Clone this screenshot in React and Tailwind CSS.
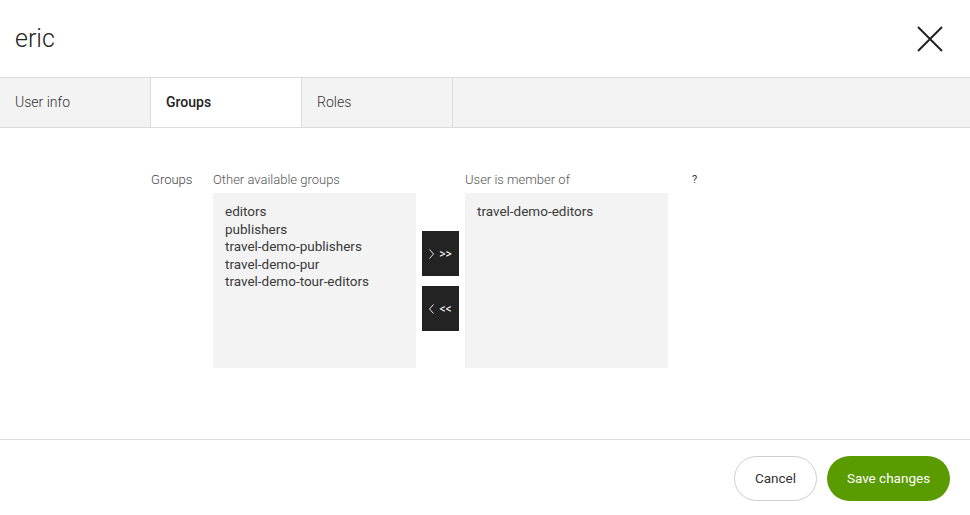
import { useState } from 'react';

const available = ['editors', 'publishers', 'travel-demo-publishers', 'travel-demo-pur', 'travel-demo-tour-editors'];
const member = ['travel-demo-editors'];

const tabs = ['User info', 'Groups', 'Roles'];

const Chevron = ({ left }) => (
    <svg width="5" height="10" viewBox="0 0 5 10" className="text-white">
        <path d={left ? 'M4.5 0.5 L0.5 5 L4.5 9.5' : 'M0.5 0.5 L4.5 5 L0.5 9.5'} stroke="currentColor" strokeWidth="0.9" fill="none" />
    </svg>
);

const App = () => {
    const [active, setActive] = useState('Groups');

    return (
        <div className="w-[970px] h-[515px] bg-white flex flex-col text-[#333]" style={{ fontFamily: 'Roboto, sans-serif' }}>
            {/* Header */}
            <div className="h-[77px] flex items-center justify-between pl-[15px] pr-[27px]">
                <span className="text-[25px] font-light text-[#222] leading-none -mt-[1px]">eric</span>
                <svg width="26" height="26" viewBox="0 0 26 26" className="text-[#222]">
                    <path d="M1 1 L25 25 M25 1 L1 25" stroke="currentColor" strokeWidth="2" fill="none" />
                </svg>
            </div>

            {/* Tabs */}
            <div className="h-[51px] flex border-t border-b border-[#dcdcdc] bg-[#f3f3f3]">
                {tabs.map(t => (
                    <button
                        key={t}
                        onClick={() => setActive(t)}
                        className={
                            'w-[151px] h-full text-left pl-[15px] text-[14px] border-r border-[#dcdcdc] ' +
                            (active === t ? 'bg-white font-medium text-[#222] -mb-[1px] h-[50px]' : 'font-light text-[#333]')
                        }
                    >
                        {t}
                    </button>
                ))}
                <div className="flex-1" />
            </div>

            {/* Content */}
            <div className="flex-1 flex pt-[41px] pl-[151px]">
                <div className="text-[13px] font-light text-[#444] w-[62px] pt-[1px]">Groups</div>
                <div className="flex flex-col">
                    <div className="text-[13px] font-light text-[#555] h-[24px] pt-[1px]">Other available groups</div>
                    <div className="w-[203px] h-[175px] bg-[#f3f3f3] pt-[10px] pl-[12px] text-[13.5px] leading-[17.5px] text-[#3a3a3a]">
                        {available.map(g => (
                            <div key={g}>{g}</div>
                        ))}
                    </div>
                </div>
                <div className="flex flex-col pt-[62px] px-[6px] gap-[10px]">
                    <button className="w-[37px] h-[45px] bg-[#232323] text-white text-[12px] flex items-center justify-center gap-[5px]">
                        <Chevron />
                        <span>&gt;&gt;</span>
                    </button>
                    <button className="w-[37px] h-[45px] bg-[#232323] text-white text-[12px] flex items-center justify-center gap-[5px]">
                        <Chevron left />
                        <span>&lt;&lt;</span>
                    </button>
                </div>
                <div className="flex flex-col">
                    <div className="text-[13px] font-light text-[#555] h-[24px] pt-[1px]">User is member of</div>
                    <div className="w-[203px] h-[175px] bg-[#f3f3f3] pt-[10px] pl-[12px] text-[13.5px] leading-[17.5px] text-[#3a3a3a]">
                        {member.map(g => (
                            <div key={g}>{g}</div>
                        ))}
                    </div>
                </div>
                <div className="pl-[24px] pt-[3px] text-[11px] text-[#333]">?</div>
            </div>

            {/* Footer */}
            <div className="h-[76px] border-t border-[#dcdcdc] flex items-center justify-end gap-[10px] pr-[20px] pt-[1px]">
                <button className="w-[83px] h-[45px] rounded-full border border-[#cfcfcf] bg-white text-[13.5px] text-[#333] pt-[1px]">
                    Cancel
                </button>
                <button className="w-[123px] h-[45px] rounded-full bg-[#599b00] text-white text-[13.5px] pt-[1px]">
                    Save changes
                </button>
            </div>
        </div>
    );
};

export default App;
